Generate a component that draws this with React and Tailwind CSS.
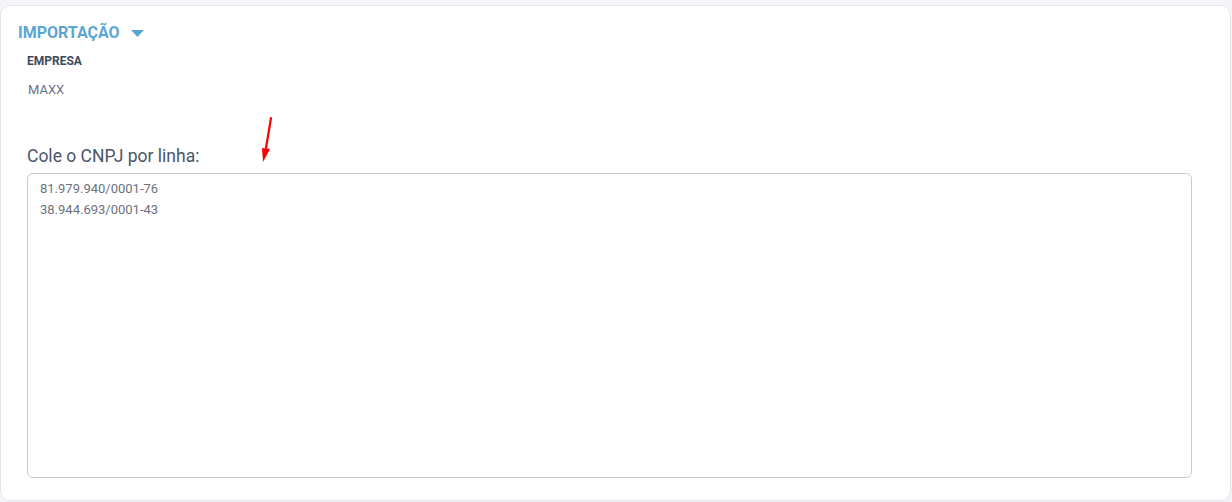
export default function App() {
  return (
    <div className="w-[1232px] h-[502px] bg-[#f3f5f8] pt-[5px] pb-[1px] pr-[1px] overflow-hidden" style={{ fontFamily: "Roboto, 'Liberation Sans', sans-serif" }}>
      <div className="relative h-[496px] bg-white border border-[#e2e5ea] rounded-[10px] pt-[17px]">
        <div className="flex items-center pl-[17px] h-[20px]">
          <span className="text-[16px] font-bold text-[#5ba5d2] leading-[20px]">IMPORTAÇÃO</span>
          <svg className="ml-[11px]" width="13" height="7" viewBox="0 0 13 7"><path d="M0 0 L13 0 L6.5 7 Z" fill="#5ba5d2" /></svg>
        </div>
        <div className="pl-[26px] mt-[11px] text-[12px] font-bold text-[#3d4a5c] leading-[14px]">EMPRESA</div>
        <div className="pl-[27px] mt-[14px] text-[13px] text-[#6b7280] leading-[16px]">MAXX</div>
        <div className="pl-[26px] mt-[48px] text-[17.5px] text-[#4a5668] leading-[20px]">Cole o CNPJ por linha:</div>
        <div className="pl-[26px] pr-[38px] mt-[7px]">
          <div className="h-[305px] border border-[#c6cad1] rounded-[6px] pl-[12px] pt-[4px] text-[13px] text-[#6b7280] leading-[21px]">
            <div>81.979.940/0001-76</div>
            <div>38.944.693/0001-43</div>
          </div>
        </div>
        <svg className="absolute left-[256px] top-[110px]" width="20" height="50" viewBox="0 0 20 50">
          <path d="M14 2 L9 32" stroke="#ff0000" strokeWidth="2.2" strokeLinecap="round" />
          <path d="M5 32 L13 33 L6 46 Z" fill="#ff0000" />
        </svg>
      </div>
    </div>
  );
}
